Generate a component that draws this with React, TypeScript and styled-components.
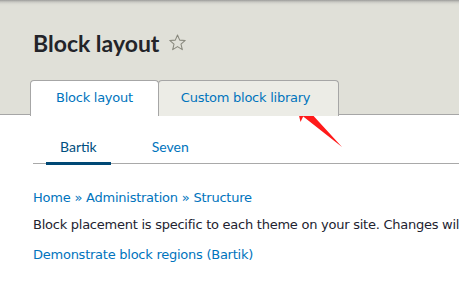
import React from "react";
import styled, { createGlobalStyle } from "styled-components";

const GlobalStyle = createGlobalStyle`
  html, body { margin: 0; padding: 0; background: #fff; }
  body {
    width: 459px;
    height: 283px;
    overflow: hidden;
    font-family: "DejaVu Sans", "Lucida Grande", sans-serif;
    font-size: 13px;
    letter-spacing: -0.25px;
    color: #222330;
  }
  ul { list-style: none; margin: 0; padding: 0; }
  a { text-decoration: none; }
`;

const Page = styled.div`
  position: relative;
  width: 459px;
  height: 283px;
  overflow: hidden;
`;

const Header = styled.header`
  background: linear-gradient(#9c9c9a 0, #c9c9c3 2px, #dcdcd4 4px, #e0e0d8 6px);
  border-bottom: 1px solid #a6a6a6;
  padding: 29px 0 0 33px;
  height: 85px;
  box-sizing: content-box;
`;

const TitleRow = styled.div`
  display: flex;
  align-items: center;
  gap: 9px;
  height: 28px;
`;

const Title = styled.h1`
  margin: 0;
  font-family: "Lato", "DejaVu Sans", sans-serif;
  font-weight: 700;
  font-size: 23px;
  line-height: 28px;
  letter-spacing: 0;
  color: #232429;
`;

const Star = styled.svg`
  width: 19px;
  height: 19px;
  margin-top: -2px;
`;

const PrimaryTabs = styled.ul`
  display: flex;
  margin: 23px 0 0 -3px;
  position: relative;
`;

const PrimaryTab = styled.li<{ $active?: boolean }>`
  border: 1px solid #a6a6a6;
  border-bottom: none;
  border-radius: 4px 4px 0 0;
  background: ${(p) => (p.$active ? "#ffffff" : "#ecece6")};
  padding: ${(p) => (p.$active ? "9px 25px" : "9px 28px 9px 22px")};
  line-height: 16px;
  height: 17px;
  margin-bottom: -1px;
  margin-left: ${(p) => (p.$active ? "0" : "-1px")};
  position: relative;
  z-index: ${(p) => (p.$active ? 2 : 1)};
  a { color: #0074bd; }
`;

const Content = styled.main`
  padding: 16px 0 0 33px;
`;

const SecondaryTabs = styled.ul`
  display: flex;
  gap: 27px;
  padding-left: 13px;
  border-bottom: 1px solid #a9a9a9;
  width: 600px;
`;

const SecondaryTab = styled.li<{ $active?: boolean }>`
  position: relative;
  padding: 6px 14px;
  font-family: "Lato", "DejaVu Sans", sans-serif;
  font-size: 14px;
  line-height: 20px;
  letter-spacing: 0;
  a { color: ${(p) => (p.$active ? "#004f80" : "#0074bd")}; }
  &::after {
    content: "";
    display: ${(p) => (p.$active ? "block" : "none")};
    position: absolute;
    left: 0;
    right: 0;
    bottom: -2px;
    height: 3px;
    background: #004875;
  }
`;

const Breadcrumb = styled.nav`
  margin-top: 24px;
  line-height: 20px;
  color: #0074bd;
  white-space: nowrap;
  a { color: #0074bd; }
`;

const Sep = styled.span`
  margin: 0 4px;
`;

const Description = styled.p`
  margin: 7px 0 0;
  line-height: 20px;
  white-space: nowrap;
  color: #222330;
`;

const RegionLink = styled.a`
  display: block;
  margin-top: 10px;
  line-height: 20px;
  color: #0074bd;
`;

const Annotation = styled.svg`
  position: absolute;
  left: 0;
  top: 0;
  width: 459px;
  height: 283px;
  pointer-events: none;
`;

export default function App() {
  return (
    <>
      <GlobalStyle />
      <Page>
        <Header>
          <TitleRow>
            <Title>Block layout</Title>
            <Star viewBox="0 0 24 24">
              <polygon
                points="12,2.5 14.8,9 21.8,9.4 16.4,14 18.1,21 12,17.2 5.9,21 7.6,14 2.2,9.4 9.2,9"
                fill="none"
                stroke="#87877c"
                strokeWidth="1.3"
                strokeLinejoin="round"
              />
            </Star>
          </TitleRow>
          <PrimaryTabs>
            <PrimaryTab $active>
              <a href="#">Block layout</a>
            </PrimaryTab>
            <PrimaryTab>
              <a href="#">Custom block library</a>
            </PrimaryTab>
          </PrimaryTabs>
        </Header>
        <Content>
          <SecondaryTabs>
            <SecondaryTab $active>
              <a href="#">Bartik</a>
            </SecondaryTab>
            <SecondaryTab>
              <a href="#">Seven</a>
            </SecondaryTab>
          </SecondaryTabs>
          <Breadcrumb>
            <a href="#">Home</a>
            <Sep>»</Sep>
            <a href="#">Administration</a>
            <Sep>»</Sep>
            <a href="#">Structure</a>
          </Breadcrumb>
          <Description>
            Block placement is specific to each theme on your site. Changes will not be saved until you click Save blocks at the bottom of the page.
          </Description>
          <RegionLink href="#">Demonstrate block regions (Bartik)</RegionLink>
        </Content>
        <Annotation viewBox="0 0 459 283">
          <polygon
            points="296,103 314,107.5 309,111 342,147 303.2,116.5 300.5,122"
            fill="#ff1a1a"
          />
        </Annotation>
      </Page>
    </>
  );
}
